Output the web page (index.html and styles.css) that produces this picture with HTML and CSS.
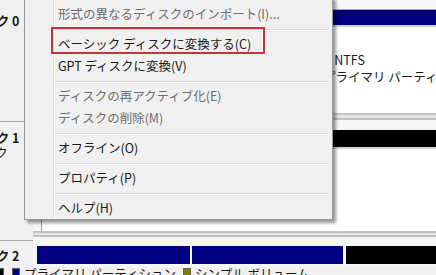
FILE: index.html
```html
<!DOCTYPE html>
<html lang="ja">
<head>
<meta charset="utf-8">
<link rel="stylesheet" href="styles.css">
</head>
<body>
<div class="screen">
  <div class="console">
    <div class="labels">
      <div class="label l0"><span class="name n0">ディスク 0</span></div>
      <div class="label l1"><span class="name n1">ディスク 1</span><span class="sub">ダイナミック</span></div>
      <div class="label l2"><span class="name n2">ディスク 2</span></div>
    </div>
    <div class="maps">
      <div class="disk d0">
        <div class="part w0a"><div class="bar primary"></div><div class="body"></div></div>
        <div class="part grow"><div class="bar primary"></div><div class="body"><b>(D:)</b><span>465 GB NTFS</span><span>正常 (プライマリ パーティション)</span></div></div>
      </div>
      <div class="disk d1">
        <div class="part grow inset"><div class="bar free"></div><div class="body framed"></div></div>
      </div>
      <div class="disk d2">
        <div class="part w2a"><div class="bar primary"></div></div>
        <div class="part w2b"><div class="bar primary"></div></div>
        <div class="part grow"><div class="bar free"></div></div>
      </div>
    </div>
  </div>
  <div class="legend">
    <span class="swatch k"></span>
    <span class="swatch b"></span><span class="ltext">プライマリ パーティション</span>
    <span class="swatch o"></span><span class="ltext">シンプル ボリューム</span>
  </div>

  <div class="menu">
    <div class="item off">形式の異なるディスクのインポート(I)...</div>
    <div class="sep"></div>
    <div class="item">ベーシック ディスクに変換する(C)</div>
    <div class="item">GPT ディスクに変換(V)</div>
    <div class="sep"></div>
    <div class="item off">ディスクの再アクティブ化(E)</div>
    <div class="item off">ディスクの削除(M)</div>
    <div class="sep"></div>
    <div class="item">オフライン(O)</div>
    <div class="sep"></div>
    <div class="item">プロパティ(P)</div>
    <div class="sep"></div>
    <div class="item">ヘルプ(H)</div>
  </div>
  <div class="highlight"></div>
</div>
</body>
</html>
```

FILE: styles.css
```css
* { box-sizing: border-box; }
html, body { margin: 0; padding: 0; }
body {
  width: 436px;
  height: 275px;
  overflow: hidden;
  background: #f0f0f0;
  font-family: "Noto Sans CJK JP", "Noto Sans", sans-serif;
  font-size: 12px;
  color: #1a1a1a;
}
.screen {
  position: relative;
  width: 436px;
  height: 275px;
  overflow: hidden;
}
.console {
  display: flex;
  height: 267px;
}
.labels {
  flex: none;
  width: 33px;
  display: flex;
  flex-direction: column;
  overflow: hidden;
  background: #f0f0f0;
}
.label {
  display: flex;
  flex-direction: column;
  border-bottom: 1px solid #a8a8a8;
  white-space: nowrap;
  line-height: 15px;
  font-size: 12.5px;
}
.l0 { flex: none; height: 122px; padding-top: 13px; }
.l1 { flex: none; height: 119px; padding-top: 8px; }
.l2 { flex: 1; padding-top: 7px; border-bottom: none; }
.name { font-weight: bold; margin-left: -40px; }
.sub { margin-left: -67px; }

.maps {
  flex: 1;
  min-width: 0;
  display: flex;
  flex-direction: column;
  background: #e6e6e6;
}
.disk {
  display: flex;
  flex: none;
  background: #f6f6f6;
  border-color: #c2c2c2;
  border-style: solid;
  border-width: 0;
}
.d0 { height: 115px; padding-top: 9px; border-bottom-width: 2px; }
.d1 { height: 115px; margin-top: 3px; padding-top: 10px; border-top-width: 2px; border-bottom-width: 2px; }
.d2 { flex: 1; margin-top: 2px; padding-top: 9px; border-top-width: 2px; }

.part { display: flex; flex-direction: column; min-width: 0; }
.grow { flex: 1; }
.w0a { flex: none; width: 252px; margin-left: 4px; margin-right: 2px; }
.w2a { flex: none; width: 153px; margin-left: 4px; margin-right: 2px; }
.w2b { flex: none; width: 151px; margin-right: 3px; }
.inset { margin-left: 8px; }
.d0 .part { border-top: 1px solid #a8a8a8; }
.bar { flex: none; height: 15px; }
.d1 .bar { height: 17px; }
.d2 .bar { height: 18px; }
.primary { background: #000080; }
.free { background: #000; }
.body {
  flex: 1;
  background: #fff;
  border-top: 2px solid #d2d2d2;
  padding: 7px 0 0 0;
  display: flex;
  flex-direction: column;
  line-height: 17px;
  font-size: 12.5px;
  white-space: nowrap;
  overflow: hidden;
}
.framed { border-left: 1px solid #9a9a9a; }

.legend {
  display: flex;
  align-items: flex-start;
  height: 8px;
  line-height: 14px;
  font-size: 12.5px;
  white-space: nowrap;
}
.swatch {
  width: 8px;
  height: 9px;
  margin-top: 1px;
  border: 1px solid #606060;
  flex: none;
}
.k { background: #000; margin-left: -4px; }
.b { background: #000080; margin-left: 8px; margin-right: 4px; }
.o { background: #808000; margin-left: 7px; margin-right: 4px; }

.menu {
  position: absolute;
  left: 24px;
  top: -3px;
  width: 309px;
  padding: 5px 0 0 0;
  background-color: #f0f0f0;
  background-image: linear-gradient(to right, transparent 28px, #e0e0e0 28px, #e0e0e0 29px, #ffffff 29px, #ffffff 30px, transparent 30px);
  border: 1px solid #979797;
  box-shadow: 3px 3px 3px rgba(0, 0, 0, 0.4);
}
.item {
  height: 22px;
  line-height: 22px;
  padding-left: 33px;
  font-size: 12.5px;
  white-space: nowrap;
  color: #1a1a1a;
}
.item.off { color: #6d6d6d; }
.sep {
  height: 2px;
  margin: 4px 3px 2px 30px;
  border-top: 1px solid #dcdcdc;
  border-bottom: 1px solid #ffffff;
}
.highlight {
  position: absolute;
  left: 51px;
  top: 27px;
  width: 214px;
  height: 27px;
  border: 2px solid #c8323c;
}
```
